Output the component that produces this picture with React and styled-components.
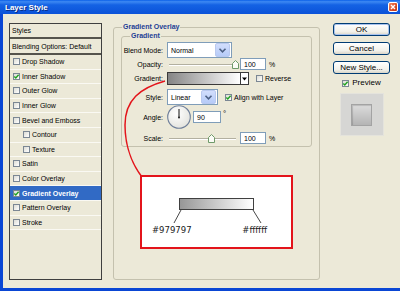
import React from 'react'
import styled, { createGlobalStyle } from 'styled-components'

const GlobalStyle = createGlobalStyle`
  html, body {
    margin: 0;
    padding: 0;
    background: #ece9d8;
  }
  body {
    font-family: "Liberation Sans", Arial, sans-serif;
    font-size: 7px;
    color: #000;
  }
`

const listItems = [
  { name: 'Drop Shadow' },
  { name: 'Inner Shadow', checked: true },
  { name: 'Outer Glow' },
  { name: 'Inner Glow' },
  { name: 'Bevel and Emboss' },
  { name: 'Contour', indent: true },
  { name: 'Texture', indent: true },
  { name: 'Satin' },
  { name: 'Color Overlay' },
  { name: 'Gradient Overlay', checked: true, selected: true },
  { name: 'Pattern Overlay' },
  { name: 'Stroke' },
]

function Check({ checked }) {
  return (
    <CheckBox>
      {checked && (
        <svg width="7" height="7" viewBox="0 0 7 7">
          <path d="M1.3 3.4 L2.8 5 L5.6 1.7" fill="none" stroke="#21a121" strokeWidth="1.4" />
        </svg>
      )}
    </CheckBox>
  )
}

function Chevron() {
  return (
    <svg width="9" height="7" viewBox="0 0 9 7">
      <polyline points="1.5,1.8 4.5,4.8 7.5,1.8" fill="none" stroke="#4d6185" strokeWidth="1.6" />
    </svg>
  )
}

function Thumb() {
  return (
    <svg width="7" height="9" viewBox="0 0 7 9">
      <path d="M0.5 8.5 V3.5 L3.5 0.5 L6.5 3.5 V8.5 Z" fill="#fbfbf6" stroke="#6f9a6a" strokeWidth="1" />
    </svg>
  )
}

export default function App() {
  return (
    <>
      <GlobalStyle />
      <Window>
        <TitleBar>
          <Title>Layer Style</Title>
          <CloseButton>
            <svg width="8" height="8" viewBox="0 0 8 8">
              <path d="M2 2 L6 6 M6 2 L2 6" stroke="#fff" strokeWidth="1.4" />
            </svg>
          </CloseButton>
        </TitleBar>
        <Body>
          <StylesList>
            <HeadRow $h={15}>Styles</HeadRow>
            <HeadRow $h={16}>Blending Options: Default</HeadRow>
            {listItems.map((item) => (
              <ListRow key={item.name} $indent={item.indent} $selected={item.selected}>
                <Check checked={item.checked} />
                <span>{item.name}</span>
              </ListRow>
            ))}
          </StylesList>

          <Group>
            <GroupTitle>Gradient Overlay</GroupTitle>
            <SubGroup>
              <SubTitle>Gradient</SubTitle>
              <Row $h={16}>
                <Label>Blend Mode:</Label>
                <Select $w={65}>
                  <SelectText>Normal</SelectText>
                  <SelectArrow>
                    <Chevron />
                  </SelectArrow>
                </Select>
              </Row>
              <Row $h={12}>
                <Label>Opacity:</Label>
                <Slider>
                  <SliderThumb $pos={98}>
                    <Thumb />
                  </SliderThumb>
                </Slider>
                <NumberInput $w={26} $ml={4}>100</NumberInput>
                <Unit>%</Unit>
              </Row>
              <Row $h={13} $mt={2}>
                <Label>Gradient:</Label>
                <GradientPicker>
                  <GradientFill />
                  <PickerArrow>
                    <svg width="5" height="4" viewBox="0 0 5 4">
                      <path d="M0 0.5 H5 L2.5 3.5 Z" fill="#000" />
                    </svg>
                  </PickerArrow>
                </GradientPicker>
                <OptionCheck>
                  <Check />
                </OptionCheck>
                <OptionText>Reverse</OptionText>
              </Row>
              <Row $h={16} $mt={4}>
                <Label>Style:</Label>
                <Select $w={51}>
                  <SelectText>Linear</SelectText>
                  <SelectArrow>
                    <Chevron />
                  </SelectArrow>
                </Select>
                <OptionCheck>
                  <Check checked />
                </OptionCheck>
                <OptionText>Align with Layer</OptionText>
              </Row>
              <Row $h={24}>
                <Label>Angle:</Label>
                <svg width="24" height="24" viewBox="0 0 24 24">
                  <defs>
                    <radialGradient id="dialFill" cx="40%" cy="35%" r="70%">
                      <stop offset="0" stopColor="#ffffff" />
                      <stop offset="1" stopColor="#e2e2dc" />
                    </radialGradient>
                  </defs>
                  <circle cx="12" cy="12" r="11.3" fill="url(#dialFill)" stroke="#6f7f9a" strokeWidth="1.1" />
                  <line x1="12" y1="12.5" x2="12" y2="4" stroke="#111" strokeWidth="1" />
                  <circle cx="12" cy="12.5" r="0.9" fill="#111" />
                </svg>
                <NumberInput $w={28} $ml={2}>90</NumberInput>
                <Degree>°</Degree>
              </Row>
              <Row $h={12} $mt={3}>
                <Label>Scale:</Label>
                <Slider>
                  <SliderThumb $pos={62}>
                    <Thumb />
                  </SliderThumb>
                </Slider>
                <NumberInput $w={26} $ml={4}>100</NumberInput>
                <Unit>%</Unit>
              </Row>
            </SubGroup>

            <Callout>
              <CalloutBar />
              <svg width="149" height="13" viewBox="0 0 149 13" style={{ display: 'block' }}>
                <line x1="39" y1="0" x2="32" y2="13" stroke="#333" strokeWidth="0.9" />
                <line x1="111" y1="0" x2="119" y2="13" stroke="#333" strokeWidth="0.9" />
              </svg>
              <HexRow>
                <span>#979797</span>
                <span>#ffffff</span>
              </HexRow>
            </Callout>
          </Group>

          <Actions>
            <Button $primary>OK</Button>
            <Button>Cancel</Button>
            <Button>New Style...</Button>
            <PreviewRow>
              <Check checked />
              <span>Preview</span>
            </PreviewRow>
            <PreviewBox>
              <PreviewSwatch />
            </PreviewBox>
          </Actions>
        </Body>

        <Annotation width="400" height="291" viewBox="0 0 400 291">
          <path
            d="M165 81 C140 88 125 100 125 125 C125 150 135 168 142 177"
            fill="none"
            stroke="#e3141b"
            strokeWidth="1.5"
          />
        </Annotation>
      </Window>
    </>
  )
}

const Window = styled.div`
  position: relative;
  width: 400px;
  height: 291px;
  display: flex;
  flex-direction: column;
  overflow: hidden;
`

const TitleBar = styled.div`
  height: 14px;
  flex-shrink: 0;
  display: flex;
  align-items: center;
  justify-content: space-between;
  padding: 0 2px 0 5px;
  background: linear-gradient(to bottom, #0a5fe8 0%, #3d88f2 12%, #1462e4 35%, #0b52d8 100%);
`

const Title = styled.span`
  color: #fff;
  font-weight: bold;
  font-size: 8px;
  text-shadow: 1px 1px 0 #0a2a80;
`

const CloseButton = styled.span`
  width: 10px;
  height: 10px;
  box-sizing: border-box;
  border: 1px solid #fff;
  border-radius: 2px;
  background: linear-gradient(135deg, #f08a66, #d84a22 60%, #c2381a);
  display: flex;
  align-items: center;
  justify-content: center;
`

const Body = styled.div`
  flex: 1;
  display: flex;
  align-items: flex-start;
  padding: 9px 0 0 6px;
  background: #ece9d8;
  border-left: 3px solid #0a46d4;
  border-bottom: 3px solid #0a46d4;
`

const StylesList = styled.div`
  width: 93px;
  height: 257px;
  box-sizing: border-box;
  border: 1px solid #3f3f3f;
  flex-shrink: 0;
`

const HeadRow = styled.div`
  height: ${({ $h }) => $h}px;
  box-sizing: border-box;
  display: flex;
  align-items: center;
  padding-left: 2px;
  border-bottom: 2px solid #55534c;
  white-space: nowrap;
`

const ListRow = styled.div`
  height: 14.6px;
  box-sizing: border-box;
  display: flex;
  align-items: center;
  gap: 2px;
  padding-left: ${({ $indent }) => ($indent ? 13 : 3)}px;
  border-bottom: 1px solid #faf9f3;
  background: ${({ $selected }) => ($selected ? '#316ac5' : 'transparent')};
  color: ${({ $selected }) => ($selected ? '#fff' : '#000')};
  font-weight: ${({ $selected }) => ($selected ? 'bold' : 'normal')};
  white-space: nowrap;
`

const CheckBox = styled.span`
  width: 7px;
  height: 7px;
  box-sizing: border-box;
  border: 1px solid #7b8794;
  background: linear-gradient(135deg, #dcdcd5, #ffffff);
  display: flex;
  align-items: center;
  justify-content: center;
  flex-shrink: 0;
  & > svg {
    margin: -1px;
  }
`

const Group = styled.fieldset`
  margin: 0 0 0 11px;
  padding: 1px 7px 0 7px;
  width: 207px;
  height: 257px;
  box-sizing: border-box;
  border: 1px solid #c4c1ae;
  border-radius: 3px;
  min-width: 0;
  flex-shrink: 0;
`

const GroupTitle = styled.legend`
  margin-left: 1px;
  padding: 0 1px;
  font-size: 7px;
  line-height: 8px;
  font-weight: bold;
  color: #1d3e95;
`

const SubGroup = styled.fieldset`
  margin: 0;
  padding: 2px 0 2px 0;
  border: 1px solid #c4c1ae;
  border-radius: 3px;
  min-width: 0;
`

const SubTitle = styled(GroupTitle)`
  margin-left: 8px;
`

const Row = styled.div`
  display: flex;
  align-items: center;
  height: ${({ $h }) => $h}px;
  margin-top: ${({ $mt }) => $mt || 0}px;
  white-space: nowrap;
`

const Label = styled.span`
  width: 41px;
  margin-right: 4px;
  text-align: right;
  flex-shrink: 0;
`

const Select = styled.div`
  width: ${({ $w }) => $w}px;
  height: 16px;
  box-sizing: border-box;
  border: 1px solid #7f9db9;
  background: #fff;
  display: flex;
  align-items: center;
  padding: 1px 1px 1px 3px;
`

const SelectText = styled.span`
  flex: 1;
`

const SelectArrow = styled.span`
  width: 13px;
  height: 12px;
  border-radius: 2px;
  background: linear-gradient(to bottom, #d2defc, #b6cbf8);
  border: 1px solid #b9c9ef;
  display: flex;
  align-items: center;
  justify-content: center;
`

const Slider = styled.div`
  position: relative;
  width: 67px;
  height: 12px;
  margin-left: 2px;
  &::before {
    content: '';
    position: absolute;
    left: 0;
    right: 0;
    top: 6px;
    height: 1px;
    background: #b3b0a0;
    border-bottom: 1px solid #fff;
  }
`

const SliderThumb = styled.span`
  position: absolute;
  top: 2px;
  left: calc(${({ $pos }) => $pos}% - 3px);
  display: flex;
`

const NumberInput = styled.span`
  width: ${({ $w }) => $w}px;
  height: 12px;
  box-sizing: border-box;
  margin-left: ${({ $ml }) => $ml}px;
  border: 1px solid #7f9db9;
  background: #fff;
  padding-left: 3px;
  display: flex;
  align-items: center;
`

const Unit = styled.span`
  margin-left: 3px;
`

const Degree = styled.span`
  margin: -7px 0 0 2px;
  font-size: 8px;
`

const GradientPicker = styled.div`
  width: 82px;
  height: 13px;
  box-sizing: border-box;
  border: 1px solid #3a3a3a;
  display: flex;
`

const GradientFill = styled.span`
  flex: 1;
  background: linear-gradient(to right, #858585, #ffffff);
`

const PickerArrow = styled.span`
  width: 7px;
  background: #fff;
  border-left: 1px solid #3a3a3a;
  display: flex;
  align-items: center;
  justify-content: center;
`

const OptionCheck = styled.span`
  margin-left: 7px;
  display: flex;
`

const OptionText = styled.span`
  margin-left: 2px;
`

const Callout = styled.div`
  margin: 28px 0 0 19px;
  width: 153px;
  height: 74px;
  box-sizing: border-box;
  border: 2px solid #e3141b;
  background: #fff;
`

const CalloutBar = styled.div`
  margin: 21px 0 0 37px;
  width: 75px;
  height: 12px;
  box-sizing: border-box;
  border: 1px solid #404040;
  background: linear-gradient(to right, #979797, #ffffff);
`

const HexRow = styled.div`
  display: flex;
  justify-content: space-between;
  padding: 0 24px 0 10px;
  margin-top: 1px;
  font-family: "DejaVu Sans", Verdana, sans-serif;
  font-size: 8.5px;
  line-height: 12px;
  color: #1a1a1a;
`

const Actions = styled.div`
  width: 57px;
  margin-left: 13px;
  display: flex;
  flex-direction: column;
  align-items: center;
  flex-shrink: 0;
`

const Button = styled.div`
  width: 57px;
  height: 13px;
  box-sizing: border-box;
  margin-bottom: 6px;
  border: 1px solid #003c74;
  border-radius: 3px;
  background: linear-gradient(to bottom, #ffffff, #f2f1ea 70%, #d9d5c8);
  box-shadow: ${({ $primary }) => ($primary ? 'inset 0 0 0 1px #a9c3ee' : 'none')};
  display: flex;
  align-items: center;
  justify-content: center;
  font-size: 8px;
  white-space: nowrap;
`

const PreviewRow = styled.div`
  margin-top: -2px;
  display: flex;
  align-items: center;
  gap: 3px;
  font-size: 8px;
  line-height: 10px;
`

const PreviewBox = styled.div`
  margin-top: 5px;
  width: 44px;
  height: 43px;
  box-sizing: border-box;
  background: #d6d6d4;
  border: 1px solid #e4e3dc;
  display: flex;
  align-items: center;
  justify-content: center;
`

const PreviewSwatch = styled.div`
  width: 21px;
  height: 22px;
  box-sizing: border-box;
  border: 1px solid #a3a3a3;
  background: linear-gradient(to bottom, #dcdcdc, #b4b4b4);
  box-shadow: inset 1px 1px 1px rgba(0, 0, 0, 0.15);
`

const Annotation = styled.svg`
  position: absolute;
  left: 0;
  top: 0;
  pointer-events: none;
`
